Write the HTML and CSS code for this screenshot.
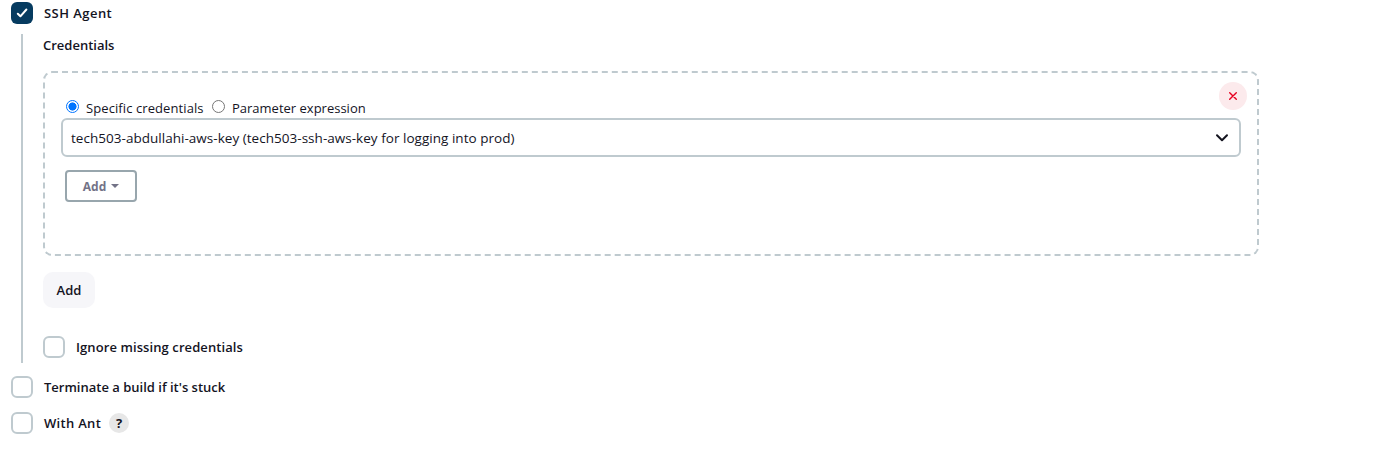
FILE: index.html
```html
<!DOCTYPE html>
<html lang="en">
<head>
<meta charset="utf-8">
<title>SSH Agent configuration</title>
<link rel="stylesheet" href="styles.css">
</head>
<body>
<main class="form">
  <div class="option">
    <span class="checkbox checkbox--on"><svg width="22" height="22" viewBox="0 0 22 22"><path d="M6.800 11.700l2.600 2.600 6-6.800"/></svg></span>
    <span class="label label--agent">SSH Agent</span>
  </div>
  <section class="nested">
    <div class="heading"><span>Credentials</span></div>
    <div class="chunk">
      <button class="remove" aria-label="Remove"><svg width="28" height="28" viewBox="0 0 28 28"><path d="M10.700 10.700l6.600 6.600M17.300 10.700l-6.600 6.600"/></svg></button>
      <div class="radios">
        <span class="radio radio--on"></span><span class="radio-label radio-label--specific">Specific credentials</span>
        <span class="radio"></span><span class="radio-label radio-label--param">Parameter expression</span>
      </div>
      <div class="select">
        <span class="select-text">tech503-abdullahi-aws-key (tech503-ssh-aws-key for logging into prod)</span>
        <svg width="14" height="10" viewBox="0 0 14 10"><path d="M2 2.200L7 7.200 12 2.200"/></svg>
      </div>
      <button class="menu-button"><span>Add</span><i class="caret"></i></button>
    </div>
    <button class="add">Add</button>
    <div class="option option--inner">
      <span class="checkbox"></span><span class="label label--ignore">Ignore missing credentials</span>
    </div>
  </section>
  <div class="option option--terminate">
    <span class="checkbox"></span><span class="label label--terminate">Terminate a build if it's stuck</span>
  </div>
  <div class="option option--ant">
    <span class="checkbox"></span><span class="label label--ant">With Ant</span><span class="help">?</span>
  </div>
</main>
</body>
</html>
```
FILE: styles.css
```css
* { box-sizing: border-box; }
body {
  margin: 0;
  background: #fff;
  color: #14141f;
  font-family: "Open Sans", "Noto Sans", sans-serif;
  font-size: 13px;
}
button { margin: 0; padding: 0; border: 0; font: inherit; color: inherit; }
svg { display: block; fill: none; stroke-linecap: round; stroke-linejoin: round; }
.form { padding: 2px 0 0 11px; }
.option { display: flex; align-items: center; height: 22px; }
.checkbox {
  flex: none;
  width: 22px;
  height: 22px;
  margin-right: 11px;
  border: 2px solid #bfcacf;
  border-radius: 6px;
}
.checkbox--on { border: 0; background: #063b60; }
.checkbox--on svg { stroke: #fff; stroke-width: 2; }
.label, .heading { font-weight: 600; white-space: nowrap; line-height: 20px; }
.label--agent { letter-spacing: 0.45px; }
.label--ignore { letter-spacing: 0.09px; }
.label--ant { width: 57px; letter-spacing: 0.3px; }
.nested {
  width: 1249px;
  height: 329px;
  margin: 10px 0 0 10px;
  padding-left: 20px;
  border-left: 2px solid #bfcacf;
}
.heading { height: 37px; padding-top: 1px; }
.chunk {
  position: relative;
  width: 1216px;
  height: 185px;
  padding: 26px 16px 0;
  border: 2px dashed #bfcacf;
  border-radius: 9px;
}
.remove {
  position: absolute;
  top: 9px;
  right: 10px;
  width: 28px;
  height: 28px;
  border-radius: 50%;
  background: #fceaec;
}
.remove svg { stroke: #e6001f; stroke-width: 1.400; }
.radios { display: flex; height: 19px; padding-left: 5px; }
.radio {
  flex: none;
  width: 13px;
  height: 13px;
  margin-top: 1px;
  border: 1px solid #767676;
  border-radius: 50%;
}
.radio--on { border-color: #0075ff; background: radial-gradient(circle, #0075ff 0 3.800px, #fff 4.300px); }
.radio-label { margin-left: 7px; line-height: 18px; white-space: nowrap; }
.radio-label--specific { width: 126px; letter-spacing: 0.09px; }
.select {
  display: flex;
  align-items: center;
  justify-content: space-between;
  width: 1180px;
  height: 39px;
  padding: 0 10px 0 8px;
  border: 2px solid #bfcacf;
  border-radius: 6px;
}
.select svg { stroke: #14141f; stroke-width: 2; }
.select-text { font-size: 13.500px; letter-spacing: 0.03px; white-space: nowrap; }
.menu-button {
  display: flex;
  align-items: center;
  justify-content: center;
  gap: 5px;
  width: 72px;
  height: 32px;
  margin: 13px 0 0 4px;
  border: 2px solid #98a6ad;
  border-radius: 4px;
  background: #fff;
  color: #737387;
  font-size: 12px;
  font-weight: 700;
}
.caret { border: 4px solid transparent; border-top-color: #737387; border-bottom: 0; }
.add {
  display: block;
  width: 52px;
  height: 36px;
  margin-top: 16px;
  border-radius: 10px;
  background: #f6f6f9;
  font-weight: 600;
}
.option--inner { margin-top: 28px; }
.option--terminate { margin-top: 13px; }
.option--ant { margin-top: 14px; }
.help {
  width: 20px;
  height: 20px;
  margin-left: 8px;
  border-radius: 50%;
  background: #e7e7e7;
  font-weight: 700;
  line-height: 20px;
  text-align: center;
}
```
